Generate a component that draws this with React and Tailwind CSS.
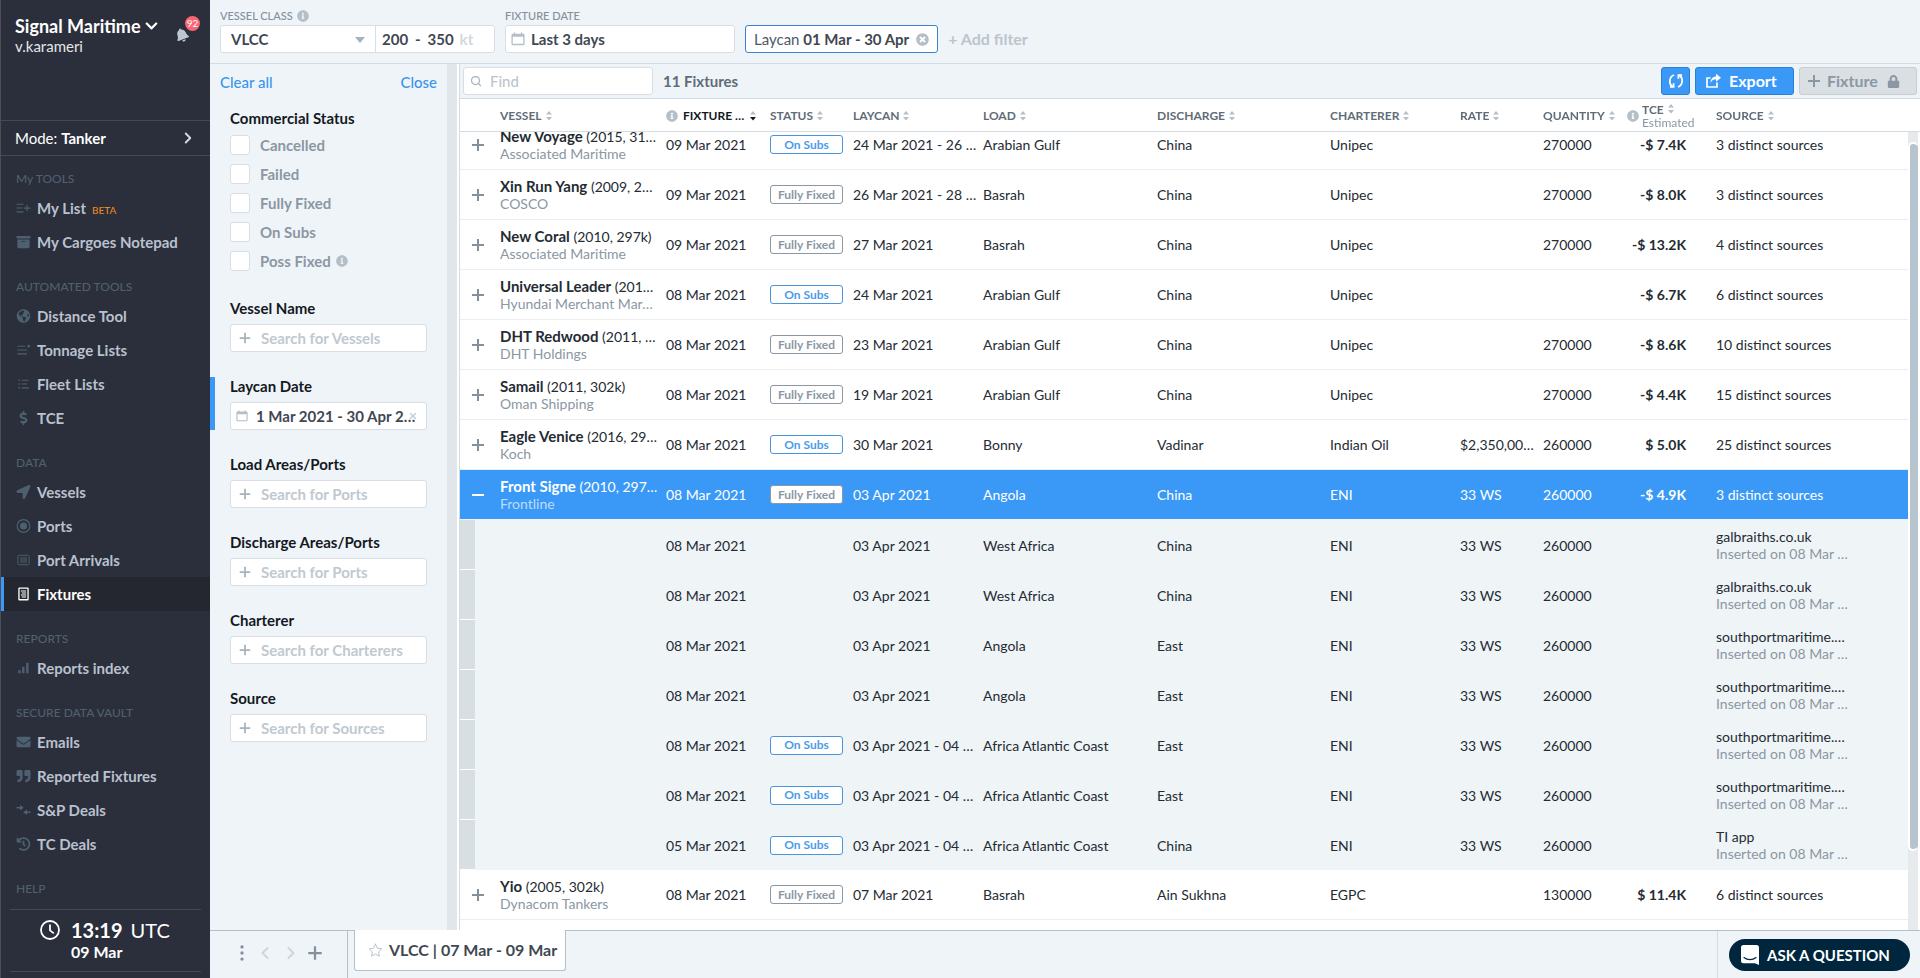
import { useLayoutEffect, useRef, useState } from "react";
import clsx from "clsx";
import {
    FaArchive,
    FaBell,
    FaChevronDown,
    FaDollarSign,
    FaEnvelope,
    FaGlobeAmericas,
    FaHistory,
    FaInfoCircle,
    FaLocationArrow,
    FaLock,
    FaQuoteRight,
    FaTimesCircle,
} from "react-icons/fa";
import { FiChevronLeft, FiChevronRight, FiSearch, FiStar, FiX } from "react-icons/fi";

const svgProps = { viewBox: "0 0 16 16", fill: "currentColor", "aria-hidden": true };

const PlusIcon = ({ className }) => (
    <svg {...svgProps} className={className}>
        <path d="M7 2h2v5h5v2H9v5H7V9H2V7h5z" />
    </svg>
);

const MinusIcon = ({ className }) => (
    <svg {...svgProps} className={className}>
        <path d="M2 7h12v2H2z" />
    </svg>
);

const ListAddIcon = ({ className }) => (
    <svg {...svgProps} className={className}>
        <path d="M0 3h8v1.3H0zM0 7.3h7v1.3H0zM0 11.7h8V13H0zM11.4 4.5h1.3v3H16v1.3h-3.3v3h-1.3v-3H8.5V7.5h2.9z" />
    </svg>
);

const TonnageIcon = ({ className }) => (
    <svg {...svgProps} className={className}>
        <path d="M1 3h9v1.3H1zM1 7.3h11v1.3H1zM1 11.7h11V13H1z" />
        <circle cx="14" cy="3.6" r="1.6" />
    </svg>
);

const FleetIcon = ({ className }) => (
    <svg {...svgProps} className={className}>
        <path d="M2 3h2.4v1.3H2zM2 7.3h2.4v1.3H2zM2 11.7h2.4V13H2zM6 3h8v1.3H6zM6 7.3h6v1.3H6zM6 11.7h8V13H6z" />
    </svg>
);

const PortsIcon = ({ className }) => (
    <svg {...svgProps} className={className}>
        <circle cx="8" cy="8" r="7.3" fill="none" stroke="currentColor" strokeWidth="1.3" />
        <circle cx="8" cy="8" r="4" />
    </svg>
);

const ArrivalsIcon = ({ className }) => (
    <svg {...svgProps} className={className}>
        <rect x="1.6" y="2.6" width="12.8" height="10.8" rx="1.5" fill="none" stroke="currentColor" strokeWidth="1.1" />
        <path d="M4 5h8v1.3H4zM4 7.3h8v1.3H4zM4 9.6h8v1.3H4z" />
    </svg>
);

const FixturesIcon = ({ className }) => (
    <svg {...svgProps} className={className}>
        <rect x="2.8" y="1.2" width="10.4" height="13.4" rx="0.6" fill="none" stroke="currentColor" strokeWidth="1.5" />
        <path d="M5 4h6v1.2H5zM6 6.3h5v1.2H6zM5 8.6h6v1.2H5zM6 10.9h5v1.2H6z" />
    </svg>
);

const BarsIcon = ({ className }) => (
    <svg {...svgProps} className={className}>
        <path d="M2 10.5h2.8V14H2zM6.4 6.5h2.8V14H6.4zM11 2h2.8v12H11z" />
    </svg>
);

const DealsIcon = ({ className }) => (
    <svg {...svgProps} className={className}>
        <path d="M0 4.6h4V2.2L8.4 5.4 4 8.6V6.2H0zM16 9.8h-4V7.4L7.6 10.6l4.4 3.2v-2.4h4z" />
    </svg>
);

const CalendarIcon = ({ className }) => (
    <svg {...svgProps} className={className}>
        <path d="M3.2 1a.8.8 0 0 1 1.6 0v1h6.4V1a.8.8 0 0 1 1.6 0v1H14a1.5 1.5 0 0 1 1.5 1.5v10A1.5 1.5 0 0 1 14 15H2a1.5 1.5 0 0 1-1.5-1.5v-10A1.5 1.5 0 0 1 2 2h1.2zM2 5.5v8h12v-8z" />
    </svg>
);

const RefreshIcon = ({ className }) => (
    <svg viewBox="0 0 16 16" fill="none" stroke="currentColor" strokeWidth="1.8" className={className} aria-hidden>
        <path d="M6 2C.6 4 .8 11.4 4.6 13.4M10 14c5.4-2 5.2-9.4 1.4-11.4" />
        <path d="M2 13.9h3.6v-3.7M14 2.1h-3.6v3.7" />
    </svg>
);

const ExportIcon = ({ className }) => (
    <svg {...svgProps} className={className}>
        <path d="M12 9.5V14H2V5h3.5" fill="none" stroke="currentColor" strokeWidth="1.7" />
        <path d="M11 .8l5 4-5 4V6.2c-2.5 0-4.3 1-5.4 3.8C5.500 6.200 7.500 3.600 11 3.400z" />
    </svg>
);

const ClockIcon = ({ className }) => (
    <svg viewBox="0 0 20 20" fill="none" stroke="currentColor" strokeWidth="1.8" className={className} aria-hidden>
        <circle cx="10" cy="10" r="9" />
        <path d="M10 4.5v5.9l3.8 3" />
    </svg>
);

const ChatIcon = ({ className }) => (
    <svg viewBox="0 0 18 20" className={className} aria-hidden>
        <path d="M2.5 0h13A2.5 2.5 0 0 1 18 2.5V20l-4-1.8H2.5A2.5 2.5 0 0 1 0 15.7V2.5A2.5 2.5 0 0 1 2.5 0z" fill="currentColor" />
        <path d="M3 12.5c3.5 2.8 8.5 2.8 12 0" fill="none" stroke="#00263e" strokeWidth="1.2" strokeLinecap="round" />
    </svg>
);

const SortIcon = ({ active }) => (
    <svg viewBox="0 0 8 12" className="h-3 w-2 shrink-0" aria-hidden>
        <path d="M4 1l3 3.500H1z" fill="#b4bfc8" />
        <path d="M4 10.500L7 7H1z" fill={active ? "#14191f" : "#b4bfc8"} />
    </svg>
);

const NAV = [
    {
        title: "My TOOLS",
        items: [
            { label: "My List", icon: ListAddIcon, tag: "BETA" },
            { label: "My Cargoes Notepad", icon: FaArchive },
        ],
    },
    {
        title: "AUTOMATED TOOLS",
        items: [
            { label: "Distance Tool", icon: FaGlobeAmericas },
            { label: "Tonnage Lists", icon: TonnageIcon },
            { label: "Fleet Lists", icon: FleetIcon },
            { label: "TCE", icon: FaDollarSign },
        ],
    },
    {
        title: "DATA",
        items: [
            { label: "Vessels", icon: FaLocationArrow },
            { label: "Ports", icon: PortsIcon },
            { label: "Port Arrivals", icon: ArrivalsIcon },
            { label: "Fixtures", icon: FixturesIcon, active: true },
        ],
    },
    { title: "REPORTS", items: [{ label: "Reports index", icon: BarsIcon }] },
    {
        title: "SECURE DATA VAULT",
        items: [
            { label: "Emails", icon: FaEnvelope },
            { label: "Reported Fixtures", icon: FaQuoteRight },
            { label: "S&P Deals", icon: DealsIcon },
            { label: "TC Deals", icon: FaHistory },
        ],
    },
    { title: "HELP", items: [] },
];

const STATUSES = ["Cancelled", "Failed", "Fully Fixed", "On Subs", "Poss Fixed"];

const COLUMNS = [
    { label: "", width: "w-[40px]" },
    { label: "VESSEL", width: "w-[166px]" },
    { label: "FIXTURE …", width: "w-[104px]", info: true, active: true },
    { label: "STATUS", width: "w-[83px]" },
    { label: "LAYCAN", width: "w-[130px]" },
    { label: "LOAD", width: "w-[174px]" },
    { label: "DISCHARGE", width: "w-[173px]" },
    { label: "CHARTERER", width: "w-[130px]" },
    { label: "RATE", width: "w-[83px]" },
    { label: "QUANTITY", width: "w-[84px]" },
    { label: "TCE", width: "w-[89px]", info: true, note: "Estimated" },
    { label: "SOURCE", width: "w-[192px]" },
];

const FIXTURES = [
    { name: "New Voyage", spec: "(2015, 31…", owner: "Associated Maritime", date: "09 Mar 2021", status: "On Subs", laycan: "24 Mar 2021 - 26 …", load: "Arabian Gulf", discharge: "China", charterer: "Unipec", qty: "270000", tce: "-$ 7.4K", source: "3 distinct sources" },
    { name: "Xin Run Yang", spec: "(2009, 2…", owner: "COSCO", date: "09 Mar 2021", status: "Fully Fixed", laycan: "26 Mar 2021 - 28 …", load: "Basrah", discharge: "China", charterer: "Unipec", qty: "270000", tce: "-$ 8.0K", source: "3 distinct sources" },
    { name: "New Coral", spec: "(2010, 297k)", owner: "Associated Maritime", date: "09 Mar 2021", status: "Fully Fixed", laycan: "27 Mar 2021", load: "Basrah", discharge: "China", charterer: "Unipec", qty: "270000", tce: "-$ 13.2K", source: "4 distinct sources" },
    { name: "Universal Leader", spec: "(201…", owner: "Hyundai Merchant Mar…", date: "08 Mar 2021", status: "On Subs", laycan: "24 Mar 2021", load: "Arabian Gulf", discharge: "China", charterer: "Unipec", tce: "-$ 6.7K", source: "6 distinct sources" },
    { name: "DHT Redwood", spec: "(2011, …", owner: "DHT Holdings", date: "08 Mar 2021", status: "Fully Fixed", laycan: "23 Mar 2021", load: "Arabian Gulf", discharge: "China", charterer: "Unipec", qty: "270000", tce: "-$ 8.6K", source: "10 distinct sources" },
    { name: "Samail", spec: "(2011, 302k)", owner: "Oman Shipping", date: "08 Mar 2021", status: "Fully Fixed", laycan: "19 Mar 2021", load: "Arabian Gulf", discharge: "China", charterer: "Unipec", qty: "270000", tce: "-$ 4.4K", source: "15 distinct sources" },
    { name: "Eagle Venice", spec: "(2016, 29…", owner: "Koch", date: "08 Mar 2021", status: "On Subs", laycan: "30 Mar 2021", load: "Bonny", discharge: "Vadinar", charterer: "Indian Oil", rate: "$2,350,00…", qty: "260000", tce: "$ 5.0K", source: "25 distinct sources" },
    {
        name: "Front Signe",
        spec: "(2010, 297…",
        owner: "Frontline",
        date: "08 Mar 2021",
        status: "Fully Fixed",
        laycan: "03 Apr 2021",
        load: "Angola",
        discharge: "China",
        charterer: "ENI",
        rate: "33 WS",
        qty: "260000",
        tce: "-$ 4.9K",
        source: "3 distinct sources",
        reports: [
            { date: "08 Mar 2021", laycan: "03 Apr 2021", load: "West Africa", discharge: "China", source: "galbraiths.co.uk" },
            { date: "08 Mar 2021", laycan: "03 Apr 2021", load: "West Africa", discharge: "China", source: "galbraiths.co.uk" },
            { date: "08 Mar 2021", laycan: "03 Apr 2021", load: "Angola", discharge: "East", source: "southportmaritime.…" },
            { date: "08 Mar 2021", laycan: "03 Apr 2021", load: "Angola", discharge: "East", source: "southportmaritime.…" },
            { date: "08 Mar 2021", status: "On Subs", laycan: "03 Apr 2021 - 04 …", load: "Africa Atlantic Coast", discharge: "East", source: "southportmaritime.…" },
            { date: "08 Mar 2021", status: "On Subs", laycan: "03 Apr 2021 - 04 …", load: "Africa Atlantic Coast", discharge: "East", source: "southportmaritime.…" },
            { date: "05 Mar 2021", status: "On Subs", laycan: "03 Apr 2021 - 04 …", load: "Africa Atlantic Coast", discharge: "China", source: "TI app" },
        ],
    },
    { name: "Yio", spec: "(2005, 302k)", owner: "Dynacom Tankers", date: "08 Mar 2021", status: "Fully Fixed", laycan: "07 Mar 2021", load: "Basrah", discharge: "Ain Sukhna", charterer: "EGPC", qty: "130000", tce: "$ 11.4K", source: "6 distinct sources" },
];

function Sidebar() {
    return (
        <aside className="flex w-[210px] shrink-0 flex-col border-l border-[#4b4e5a] bg-[#2b2e3b] text-white">
            <div className="flex h-[120px] items-start justify-between pt-4 pl-[14px] pr-[10px]">
                <div>
                    <button type="button" className="flex h-5 items-center gap-1 text-lg font-bold whitespace-nowrap">
                        Signal Maritime
                        <FaChevronDown className="h-[14px] w-[13px]" />
                    </button>
                    <p className="text-[15px] leading-5 text-[#e3e6ea]">v.karameri</p>
                </div>
                <button type="button" aria-label="92 notifications" className="relative h-[26px] w-[25px]">
                    <FaBell className="absolute bottom-0 left-0 h-[14px] w-[14px] -rotate-[20deg] text-[#bcc8d0]" />
                    <span className="absolute top-0 right-0 flex h-[15px] w-[15px] items-center justify-center rounded-full bg-[#fb6573] text-[10px]">
                        92
                    </span>
                </button>
            </div>
            <button type="button" className="flex h-9 shrink-0 items-center justify-between border-y border-[#464955] pl-[14px] pr-[13px] text-[15px]">
                <span>
                    Mode: <b className="font-bold">Tanker</b>
                </span>
                <FiChevronRight className="h-[18px] w-[18px] text-[#d6dade]" strokeWidth={2.5} />
            </button>
            <nav className="flex min-h-0 flex-1 flex-col gap-[15px] overflow-hidden pt-[10px]">
                {NAV.map(({ title, items }) => (
                    <div key={title}>
                        <h2 className="pl-[15px] text-xs leading-[25px] font-medium text-[#50606d]">{title}</h2>
                        {items.map(({ label, icon: Icon, tag, active }) => (
                            <a
                                key={label}
                                href="#"
                                className={clsx(
                                    "-ml-px flex h-[34px] items-center border-l-4 pl-3 text-[15px] font-bold",
                                    active ? "border-[#3a99f7] bg-[#24272f] text-white" : "border-transparent text-[#b9c1cf]",
                                )}
                            >
                                <span className={clsx("mr-[6px] flex w-[15px] justify-center", !active && "text-[#4d6070]")}>
                                    <Icon className="h-[14px] w-[15px]" />
                                </span>
                                {label}
                                {tag && <span className="ml-[6px] pt-1 text-[10px] font-medium text-[#e8891c]">{tag}</span>}
                            </a>
                        ))}
                    </div>
                ))}
            </nav>
            <div className="mx-[9px] mb-[6px] flex h-[63px] shrink-0 items-start gap-[11px] border-y border-[#464955] pt-[10px] pl-[30px]">
                <ClockIcon className="h-5 w-5" />
                <div>
                    <p className="flex items-baseline gap-2 text-xl leading-[21px]">
                        <b className="font-bold">13:19</b>
                        <span>UTC</span>
                    </p>
                    <p className="text-base leading-[21px] font-bold">09 Mar</p>
                </div>
            </div>
        </aside>
    );
}

const fieldBox = "flex h-7 items-center rounded-[3px] border border-[#d8dee3] bg-white";

function TopBar() {
    return (
        <header className="flex h-16 shrink-0 items-start border-b border-[#d5dce1] pt-2 pl-[10px]">
            <div>
                <div className="mb-px flex h-4 items-center gap-1 text-[11px] font-medium text-[#84909c]">
                    <label htmlFor="vessel-class">VESSEL CLASS</label>
                    <FaInfoCircle className="h-3 w-3 text-[#b4bfc8]" />
                </div>
                <div className={clsx(fieldBox, "w-[275px]")}>
                    <div className="relative h-full w-[155px] border-r border-[#d8dee3]">
                        <select
                            id="vessel-class"
                            className="h-full w-full appearance-none bg-transparent pl-[10px] text-[15px] leading-4 font-bold text-[#3f4752] outline-none"
                        >
                            <option>VLCC</option>
                        </select>
                        <svg viewBox="0 0 10 6" className="pointer-events-none absolute top-[11px] right-[10px] h-[6px] w-[10px]" aria-hidden>
                            <path d="M0 0h10L5 6z" fill="#a6b2bc" />
                        </svg>
                    </div>
                    <div className="flex items-center pl-[6px] text-[15px] font-bold text-[#3f4752]">
                        <input aria-label="Minimum size" defaultValue="200" className="w-[33px] outline-none" />
                        <span>-</span>
                        <input aria-label="Maximum size" defaultValue="350" className="ml-[7px] w-8 outline-none" />
                        <span className="text-[#d3d8dc]">kt</span>
                    </div>
                </div>
            </div>
            <div className="ml-[10px]">
                <label htmlFor="fixture-date" className="mb-px flex h-4 items-center text-[11px] font-medium text-[#84909c]">
                    FIXTURE DATE
                </label>
                <div className={clsx(fieldBox, "w-[230px] gap-[6px] pl-[5px]")}>
                    <CalendarIcon className="h-[14px] w-[14px] text-[#b4bfc8]" />
                    <input id="fixture-date" defaultValue="Last 3 days" className="min-w-0 flex-1 text-[15px] font-bold text-[#3f4752] outline-none" />
                </div>
            </div>
            <div className="mt-[17px] ml-[10px] flex h-7 items-center gap-[7px] rounded-[3px] border border-[#3c82cf] bg-white px-2 text-[15px] whitespace-nowrap text-[#4f5964]">
                <span>
                    Laycan <b className="font-bold text-[#3f4752]">01 Mar - 30 Apr</b>
                </span>
                <button type="button" aria-label="Remove laycan filter">
                    <FaTimesCircle className="h-[13px] w-[13px] text-[#b4bfc8]" />
                </button>
            </div>
            <button type="button" className="mt-[17px] ml-[10px] h-7 text-base font-bold text-[#bcc5cd]">
                + Add filter
            </button>
        </header>
    );
}

function FilterField({ id, label, children, active }) {
    return (
        <div className={clsx("border-l-[5px] pr-5 pl-[15px]", active ? "border-[#3a99f7]" : "border-transparent")}>
            <label htmlFor={id} className="mb-[7px] block text-[15px] leading-[18px] font-bold text-[#14191f]">
                {label}
            </label>
            {children}
        </div>
    );
}

function SearchField({ id, label, noun }) {
    return (
        <FilterField id={id} label={label}>
            <div className={clsx(fieldBox, "gap-[9px] pl-[7px]")}>
                <PlusIcon className="h-[14px] w-[14px] text-[#a6b2bc]" />
                <input
                    id={id}
                    placeholder={"Search for " + noun}
                    className="min-w-0 flex-1 text-[15px] font-bold outline-none placeholder:text-[#c0c9d0]"
                />
            </div>
        </FilterField>
    );
}

function FilterPanel() {
    return (
        <section aria-label="Filters" className="flex w-[250px] shrink-0 border-r border-[#d5dce1]">
            <div className="flex min-w-0 flex-1 flex-col">
                <div className="flex h-9 items-center justify-between px-[10px] text-[15px] font-medium text-[#3a94ee]">
                    <button type="button">Clear all</button>
                    <button type="button">Close</button>
                </div>
                <fieldset className="mt-[9px] pl-5">
                    <legend className="mb-2 text-[15px] leading-[18px] font-bold text-[#14191f]">Commercial Status</legend>
                    <div className="flex flex-col gap-[9px]">
                        {STATUSES.map((status) => (
                            <label key={status} className="flex h-5 items-center gap-[10px] text-[15px] font-bold text-[#8b97a3]">
                                <input
                                    type="checkbox"
                                    className="h-5 w-5 appearance-none rounded-[3px] border border-[#d8dee3] bg-white checked:bg-[#3a99f7]"
                                />
                                <span className="flex items-center gap-[5px]">
                                    {status}
                                    {status === "Poss Fixed" && <FaInfoCircle className="h-3 w-3 text-[#b4bfc8]" />}
                                </span>
                            </label>
                        ))}
                    </div>
                </fieldset>
                <div className="mt-7 flex flex-col gap-[25px]">
                    <SearchField id="vessel-name" label="Vessel Name" noun="Vessels" />
                    <FilterField id="laycan-date" label="Laycan Date" active>
                        <div className={clsx(fieldBox, "pr-2 pl-[5px]")}>
                            <CalendarIcon className="h-3 w-3 shrink-0 text-[#b4bfc8]" />
                            <input
                                id="laycan-date"
                                defaultValue="1 Mar 2021 - 30 Apr 2021"
                                className="ml-2 min-w-0 flex-1 text-[15px] font-bold text-ellipsis text-[#3f4752] outline-none"
                            />
                            <button type="button" aria-label="Clear laycan date" className="-ml-2">
                                <FiX className="h-[10px] w-[10px] text-[#c0c9d0]" strokeWidth={3} />
                            </button>
                        </div>
                    </FilterField>
                    <SearchField id="load-ports" label="Load Areas/Ports" noun="Ports" />
                    <SearchField id="discharge-ports" label="Discharge Areas/Ports" noun="Ports" />
                    <SearchField id="charterer" label="Charterer" noun="Charterers" />
                    <SearchField id="source" label="Source" noun="Sources" />
                </div>
            </div>
            <div className="w-3 border-r-2 border-white bg-[#e1e6eb]" />
        </section>
    );
}

function StatusTag({ status }) {
    return (
        <span
            className={clsx(
                "flex h-[19px] w-[73px] items-center justify-center rounded-[3px] border bg-white text-xs font-bold",
                status === "On Subs" ? "border-[#4a94de] text-[#4a9bea]" : "border-[#8b97a3] text-[#8b97a3]",
            )}
        >
            {status}
        </span>
    );
}

function FixtureRow({ fixture, open, onToggle }) {
    return (
        <tr
            className={clsx(
                "h-[50px] [&>td]:border-b",
                open ? "bg-[#3a99f7] text-white [&>td]:border-[#eff4f7]" : "bg-white [&>td]:border-[#eceff2]",
            )}
        >
            <td>
                <button type="button" onClick={onToggle} aria-label={open ? "Collapse" : "Expand"} className="ml-[10px] block">
                    {open ? <MinusIcon className="h-4 w-4" /> : <PlusIcon className="h-4 w-4 text-[#84909c]" />}
                </button>
            </td>
            <td>
                <b className="text-[15px] leading-[17px] font-bold">{fixture.name}</b> {fixture.spec}
                <div className={open ? "text-[#bcdcfb]" : "text-[#8b97a3]"}>{fixture.owner}</div>
            </td>
            <td>{fixture.date}</td>
            <td>
                <StatusTag status={fixture.status} />
            </td>
            <td>{fixture.laycan}</td>
            <td>{fixture.load}</td>
            <td>{fixture.discharge}</td>
            <td>{fixture.charterer}</td>
            <td>{fixture.rate}</td>
            <td>{fixture.qty}</td>
            <td className="pr-[30px] text-right font-bold">{fixture.tce}</td>
            <td>{fixture.source}</td>
        </tr>
    );
}

function ReportRow({ report, parent }) {
    return (
        <tr className="h-[50px] bg-[#eff4f7]">
            <td className="h-[50px]">
                <div className="h-full w-[15px] border-b border-white bg-[#d8dfe2]" />
            </td>
            <td />
            <td>{report.date}</td>
            <td>{report.status && <StatusTag status={report.status} />}</td>
            <td>{report.laycan}</td>
            <td>{report.load}</td>
            <td>{report.discharge}</td>
            <td>{parent.charterer}</td>
            <td>{parent.rate}</td>
            <td>{parent.qty}</td>
            <td />
            <td>
                {report.source}
                <div className="text-[#8b97a3]">Inserted on 08 Mar …</div>
            </td>
        </tr>
    );
}

function FixturesTable() {
    const [openName, setOpenName] = useState("Front Signe");
    const scroller = useRef(null);

    useLayoutEffect(() => {
        scroller.current.scrollTop = 12;
    }, []);

    return (
        <div className="flex min-h-0 flex-1">
            <div ref={scroller} className="min-w-0 flex-1 overflow-hidden bg-white">
                <table className="w-full table-fixed border-separate border-spacing-0 text-sm leading-[17px] whitespace-nowrap text-[#242b33]">
                    <thead className="sticky top-0 z-10 bg-white shadow-[inset_0_-1px_0_#d5dce1]">
                        <tr className="h-[33px]">
                            {COLUMNS.map((col) => (
                                <th
                                    key={col.label}
                                    className={clsx(col.width, "text-left text-xs leading-[13px] font-bold", col.active ? "text-[#14191f]" : "text-[#5f6d79]")}
                                >
                                    {col.label && (
                                        <div className={clsx("flex items-center", col.active ? "gap-[5px]" : "gap-[3px]")}>
                                            {col.info && <FaInfoCircle className="h-3 w-3 shrink-0 text-[#b4bfc8]" />}
                                            <div>
                                                <span className="flex items-center gap-[3px]">
                                                    {col.label}
                                                    {!col.active && <SortIcon />}
                                                </span>
                                                {col.note && <div className="font-normal text-[#8b97a3]">{col.note}</div>}
                                            </div>
                                            {col.active && <SortIcon active />}
                                        </div>
                                    )}
                                </th>
                            ))}
                        </tr>
                    </thead>
                    <tbody>
                        {FIXTURES.map((fixture) => {
                            const open = fixture.name === openName;
                            return [
                                <FixtureRow
                                    key={fixture.name}
                                    fixture={fixture}
                                    open={open}
                                    onToggle={() => setOpenName(open ? "" : fixture.name)}
                                />,
                                ...(open ? fixture.reports || [] : []).map((report, i) => (
                                    <ReportRow key={fixture.name + i} report={report} parent={fixture} />
                                )),
                            ];
                        })}
                    </tbody>
                </table>
                <div className="h-20" />
            </div>
            <div className="flex w-3 shrink-0 flex-col bg-white">
                <div className="h-[33px] shrink-0 border-b border-[#d5dce1]" />
                <div className="mr-[2px] flex-1 bg-[#e6eaed] pt-[10px]">
                    <div className="h-[90%] rounded-full border-2 border-r-0 border-white bg-[#b7c4ce]" />
                </div>
            </div>
        </div>
    );
}

function Toolbar() {
    return (
        <div className="flex h-[35px] shrink-0 items-center border-b border-[#d5dce1] px-[3px]">
            <div className={clsx(fieldBox, "w-[190px] gap-2 pl-[6px]")}>
                <FiSearch className="h-3 w-3 text-[#a6b2bc]" strokeWidth={2.5} />
                <input aria-label="Find" placeholder="Find" className="min-w-0 flex-1 text-[15px] font-medium outline-none placeholder:text-[#bcc5cd]" />
            </div>
            <h1 className="ml-[10px] text-[15px] leading-5 font-bold text-[#5f6d79]">11 Fixtures</h1>
            <div className="ml-auto flex gap-[5px] text-base font-bold">
                <button
                    type="button"
                    aria-label="Refresh"
                    className="flex h-7 w-[29px] items-center justify-center rounded-[3px] border border-[#2b7fd6] bg-[#3a99f7] text-white"
                >
                    <RefreshIcon className="h-4 w-4" />
                </button>
                <button type="button" className="flex h-7 w-[99px] items-center gap-2 rounded-[3px] border border-[#2b7fd6] bg-[#3a99f7] pl-[9px] text-white">
                    <ExportIcon className="h-4 w-4" />
                    Export
                </button>
                <button type="button" className="flex h-7 w-[118px] items-center rounded-[3px] border border-[#c6ced4] bg-[#d9dfe3] pl-[6px] text-[#8b97a3]">
                    <PlusIcon className="mr-[5px] h-4 w-4" />
                    Fixture
                    <FaLock className="ml-[9px] h-[13px] w-[13px]" />
                </button>
            </div>
        </div>
    );
}

function BottomBar() {
    return (
        <footer className="flex h-12 shrink-0 items-stretch border-t border-[#b4bfc8]">
            <div className="flex w-[138px] items-center border-r border-[#b4bfc8] pb-1 pl-6 text-[#84909c]">
                <button type="button" aria-label="Menu">
                    <svg {...svgProps} className="h-5 w-4">
                        <circle cx="8" cy="1.9" r="1.7" />
                        <circle cx="8" cy="8" r="1.7" />
                        <circle cx="8" cy="14.1" r="1.7" />
                    </svg>
                </button>
                <button type="button" aria-label="Previous" className="ml-[5px]">
                    <FiChevronLeft className="h-5 w-5 text-[#cfd6db]" strokeWidth={2.5} />
                </button>
                <button type="button" aria-label="Next" className="ml-[6px]">
                    <FiChevronRight className="h-5 w-5 text-[#cfd6db]" strokeWidth={2.5} />
                </button>
                <button type="button" aria-label="Add tab" className="ml-[5px]">
                    <PlusIcon className="h-[18px] w-[18px]" />
                </button>
            </div>
            <button
                type="button"
                className="-mt-px ml-[6px] flex h-[41px] w-[212px] items-center gap-[6px] rounded-b-[3px] border border-t-0 border-[#b4bfc8] bg-white pl-[13px] text-base font-bold whitespace-nowrap text-[#3f4752]"
            >
                <FiStar className="h-[15px] w-[15px] text-[#b4bfc8]" strokeWidth={1.5} />
                VLCC | 07 Mar - 09 Mar
            </button>
            <div className="ml-auto border-l border-[#d5dce1] pt-2 pr-[10px] pl-[11px]">
                <button type="button" className="flex h-8 w-[181px] items-center gap-2 rounded-full bg-[#00263e] pl-3 text-[15px] font-bold whitespace-nowrap text-white">
                    <ChatIcon className="h-5 w-[18px]" />
                    ASK A QUESTION
                </button>
            </div>
        </footer>
    );
}

export default function App() {
    return (
        <div className="flex h-screen overflow-hidden bg-[#eff4f8] font-[Lato,sans-serif]">
            <Sidebar />
            <div className="flex min-w-0 flex-1 flex-col">
                <TopBar />
                <div className="flex min-h-0 flex-1">
                    <FilterPanel />
                    <main className="flex min-w-0 flex-1 flex-col">
                        <Toolbar />
                        <FixturesTable />
                    </main>
                </div>
                <BottomBar />
            </div>
        </div>
    );
}
